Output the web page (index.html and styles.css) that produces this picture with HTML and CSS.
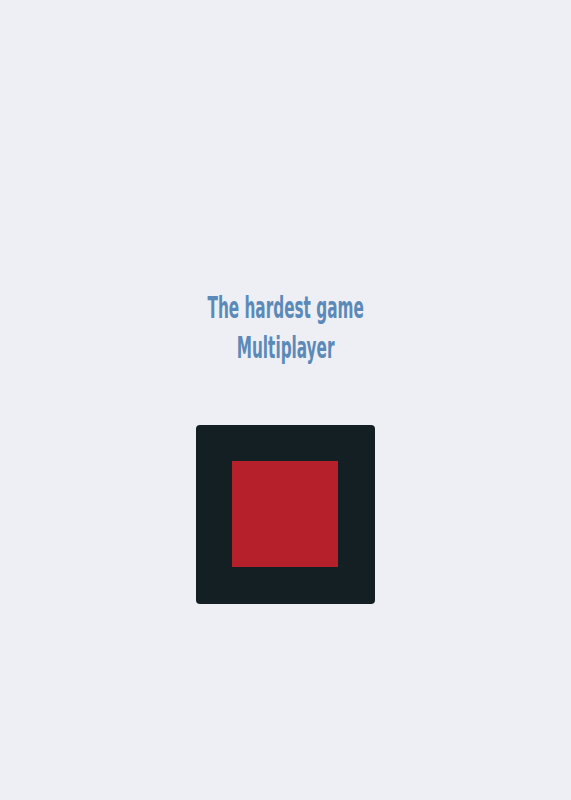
FILE: index.html
```html
<!DOCTYPE html>
<html>
<head>
<meta charset="utf-8">
<link rel="stylesheet" href="styles.css">
</head>
<body>
<main class="page">
  <h1 class="title"><span class="line">The hardest game</span><span class="line">Multiplayer</span></h1>
  <div class="board">
    <div class="player"></div>
  </div>
</main>
</body>
</html>
```
FILE: styles.css
```css
html, body {
  margin: 0;
  padding: 0;
  background: #eeeff5;
}
.page {
  display: flex;
  flex-direction: column;
  align-items: center;
  padding-top: 287px;
}
.title {
  margin: 0;
  display: flex;
  flex-direction: column;
  align-items: center;
  font-family: "DejaVu Sans Condensed", sans-serif;
  font-weight: 700;
  font-size: 31px;
  line-height: 40px;
  color: #5b8ab8;
  transform: scaleX(0.548);
}
.board {
  margin-top: 58px;
  width: 179px;
  height: 179px;
  box-sizing: border-box;
  padding: 36px;
  background: #131f22;
  border-radius: 4px;
}
.player {
  width: 106px;
  height: 106px;
  background: #b5202b;
}
```
